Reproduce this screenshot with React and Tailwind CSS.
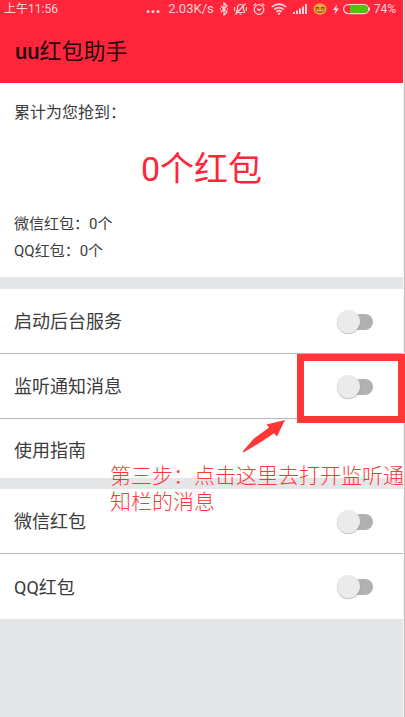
import React from "react";

function StatusBar() {
  return (
    <div className="flex h-[18px] items-center justify-between pl-1 pr-[7px] text-[12px] leading-[18px] text-[#ffd3d7]">
      <span>上午11:56</span>
      <div className="flex items-center gap-[6px]">
        <svg className="mr-[2px]" width="14" height="14" viewBox="0 0 14 14" fill="currentColor" aria-hidden="true">
          <circle cx="2" cy="9.5" r="1.5" />
          <circle cx="7" cy="9.5" r="1.5" />
          <circle cx="12" cy="9.5" r="1.5" />
        </svg>
        <span className="text-[13px]">2.03K/s</span>
        <svg width="8" height="14" viewBox="0 0 8 14" fill="none" stroke="currentColor" strokeWidth="1.3" aria-hidden="true">
          <path d="M1 4l6 6-3 3V1l3 3-6 6" />
          <path d="M0 7h1M7 7h1" />
        </svg>
        <svg width="13" height="14" viewBox="0 0 13 14" fill="none" stroke="currentColor" strokeWidth="1.2" aria-hidden="true">
          <path d="M2.5 10.500V9l1-1V5.500a3 3 0 0 1 6 0V8l1 1v1.500zM5.500 12.200h2" />
          <path d="M11.500 1.500L1.500 12.500M.6 5v4M12.400 5v4" />
        </svg>
        <svg width="12" height="14" viewBox="0 0 12 14" fill="none" stroke="currentColor" strokeWidth="1.2" aria-hidden="true">
          <circle cx="6" cy="7.500" r="4.800" />
          <path d="M4 6.500l2 2 2.200-2M.6 3.500l2.400-2M11.400 3.500L9 1.500" />
        </svg>
        <svg width="16" height="14" viewBox="0 0 16 14" fill="none" stroke="currentColor" strokeWidth="1.6" aria-hidden="true">
          <path d="M.8 5a10.500 10.500 0 0 1 14.400 0M3.200 7.500a7 7 0 0 1 9.600 0M5.400 9.800a4 4 0 0 1 5.200 0" />
          <circle cx="8" cy="11.600" r="1.200" fill="currentColor" stroke="none" />
        </svg>
        <svg width="14" height="14" viewBox="0 0 14 14" fill="currentColor" aria-hidden="true">
          <path d="M0 10h2v2H0zM3 8.500h2V12H3zM6 6.500h2V12H6zM9 4.500h2V12H9zM12 2h2v10h-2z" />
        </svg>
        <svg width="14" height="14" viewBox="0 0 14 14" aria-hidden="true">
          <ellipse cx="7" cy="7" rx="6.500" ry="5.800" fill="#f5a331" />
          <path d="M2.500 5h3.500v1.500H2.500zM8 5h3.500v1.500H8z" fill="#7a4c1e" />
          <path d="M2.500 7.500h9a4.500 3.200 0 0 1-9 0z" fill="#8a5420" />
          <path d="M3.800 8h1.700v1.200H3.800zM6.200 8h1.700v1.200H6.200zM8.600 8h1.700v1.200H8.600z" fill="#ffe2b0" />
        </svg>
        <div className="flex items-center gap-1">
          <svg width="6" height="14" viewBox="0 0 6 14" fill="currentColor" aria-hidden="true">
            <path d="M4 2L0 8h2.500L1.500 12.500 6 6.500H3.300z" />
          </svg>
          <svg width="27" height="14" viewBox="0 0 27 14" aria-hidden="true">
            <rect x=".6" y="2.600" width="25" height="9" rx="4.500" fill="none" stroke="currentColor" strokeWidth="1.2" />
            <path d="M7 3.200h14a3.900 3.900 0 0 1 0 7.800H7z" fill="#4fc20a" />
            <path d="M26 5.500h1v3h-1z" fill="currentColor" />
          </svg>
          <span>74%</span>
        </div>
      </div>
    </div>
  );
}

function SwitchRow({ id, label, divider, children }) {
  return (
    <div
      className={
        "relative flex h-[65px] items-center justify-between bg-white pl-[14px] pr-[30px] " +
        (divider ? "border-b border-[#b8b8b8]" : "")
      }
    >
      <label htmlFor={id} className="pt-[2px]">{label}</label>
      <input
        id={id}
        type="checkbox"
        role="switch"
        className="relative h-[23px] w-9 appearance-none before:absolute before:inset-x-0 before:top-1 before:h-4 before:rounded-full before:bg-[#b1b1b1] after:absolute after:left-0 after:top-0 after:size-[23px] after:rounded-full after:bg-[#ebebeb] after:shadow-[0_1px_1px_rgba(0,0,0,0.25)] checked:after:left-[13px]"
      />
      {children}
    </div>
  );
}

export default function App() {
  return (
    <div className="min-h-screen border-r border-[#c4c4c4] bg-[#f4f4f4] pr-px font-[Roboto,'Noto_Sans_CJK_SC',sans-serif] text-[#3c3c3c]">
      <div className="min-h-screen bg-[#e5e6e8]">
        <header className="h-[83px] bg-[#ff263c]">
          <StatusBar />
          <h1 className="px-[15px] pt-4 text-[22px] leading-9 text-[#26080c]">
            <span className="font-medium">uu</span>红包助手
          </h1>
        </header>

        <section className="bg-white px-[14px] pb-3 pt-[18px]">
          <p className="text-[16px] leading-6">累计为您抢到：</p>
          <p className="pb-4 pt-[18px] text-center text-[34px] leading-[52px] text-[#ff263c]">0个红包</p>
          <div className="text-[15px] leading-[27px]">
            <p>微信红包：0个</p>
            <p>QQ红包：0个</p>
          </div>
        </section>

        <main className="mt-3 text-[18px] leading-7">
          <SwitchRow id="service" label="启动后台服务" divider />
          <SwitchRow id="notify" label="监听通知消息" divider>
            <div className="pointer-events-none absolute -right-[2px] top-0 z-10 h-[69px] w-[108px] border-[7px] border-[#ff3737]" />
          </SwitchRow>
          <div className="relative h-[59px] bg-white px-[14px] pt-[18px]">
            <a href="#guide">使用指南</a>
            <svg className="absolute left-[243px] top-0 z-10" width="43" height="34" viewBox="0 0 43 34" fill="#ff3737" aria-hidden="true">
              <path d="M42 1L34 17.500l-3-3.200L18 23 .5 33.500 0 32 11 19.500 26 8.500 23.500 5.500z" />
            </svg>
            <p className="absolute -right-[2px] left-[110px] top-[42px] z-10 font-['Noto_Sans_CJK_SC',sans-serif] text-[21px] font-light leading-[26px] text-[#ff3737]">
              第三步：点击这里去打开监听通知栏的消息
            </p>
          </div>
          <div className="mt-[11px]">
            <SwitchRow id="wechat" label="微信红包" divider />
            <SwitchRow id="qq" label="QQ红包" />
          </div>
        </main>
      </div>
    </div>
  );
}
